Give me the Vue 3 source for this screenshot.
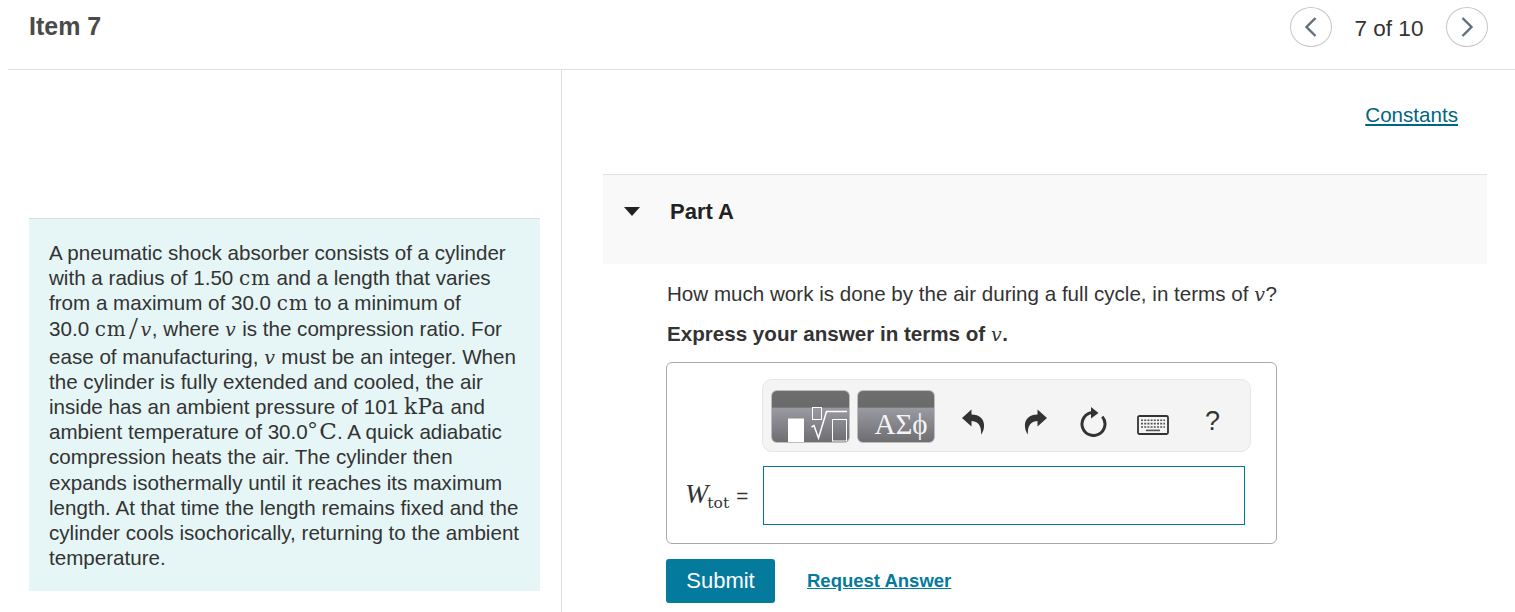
<template>
  <div class="page">
    <header class="top">
      <h1>Item 7</h1>
      <nav class="pager">
        <button class="round" aria-label="Previous">
          <svg width="14" height="22" viewBox="0 0 14 22"><path d="M11.5 2 L2.5 11 L11.5 20" fill="none" stroke="#5f6f7c" stroke-width="2.4"/></svg>
        </button>
        <span class="count">7 of 10</span>
        <button class="round" aria-label="Next">
          <svg width="14" height="22" viewBox="0 0 14 22"><path d="M2.5 2 L11.5 11 L2.5 20" fill="none" stroke="#5f6f7c" stroke-width="2.4"/></svg>
        </button>
      </nav>
    </header>

    <div class="columns">
      <section class="left">
        <div class="intro">
          <p>
            <span v-for="(line, i) in introLines" :key="i" class="line" :class="{ tall: line.tall }">
              <template v-for="(part, j) in line.parts" :key="j">
                <span v-if="part.m" :class="part.m">{{ part.t }}</span>
                <template v-else>{{ part.t }}</template>
              </template>
            </span>
          </p>
        </div>
      </section>

      <section class="right">
        <div class="links"><a href="#" class="constants">Constants</a></div>

        <div class="part-head">
          <span class="caret"></span>
          <h2>Part A</h2>
        </div>

        <div class="part-body">
          <p class="question">How much work is done by the air during a full cycle, in terms of <i class="mv">v</i>?</p>
          <p class="express">Express your answer in terms of <i class="mv">v</i>.</p>

          <div class="answer">
            <div class="toolbar">
              <div class="tool-btn wide">
                <svg width="77" height="35" viewBox="0 0 77 35">
                  <rect x="16" y="11.5" width="16" height="23.5" fill="#fff"/>
                  <rect x="40.5" y="0.5" width="9" height="12" fill="none" stroke="#fff" stroke-width="1"/>
                  <path d="M39.5 20 L42 18.5 L46.5 31 L54.5 4.5 H75" fill="none" stroke="#fff" stroke-width="1.5"/>
                  <rect x="60.5" y="12.5" width="14" height="21.5" fill="none" stroke="#fff" stroke-width="1"/>
                </svg>
              </div>
              <div class="tool-btn greek"><span>ΑΣϕ</span></div>

              <div class="tool-icons">
                <svg width="24" height="26" viewBox="0 0 24 26"><path d="M1 9 L10.5 .5 V5.5 C18 5.5 24 10 23 18 C22.8 21 21.5 23.5 20 25.5 C20.5 20 19.5 12.5 10.5 12 V17.5 Z" fill="#333"/></svg>
                <svg width="24" height="26" viewBox="0 0 24 26"><path d="M23 9 L13.5 .5 V5.5 C6 5.5 0 10 1 18 C1.2 21 2.5 23.5 4 25.5 C3.5 20 4.5 12.5 13.5 12 V17.5 Z" fill="#333"/></svg>
                <svg width="28" height="30" viewBox="0 0 28 30"><path d="M12 5.6 A11.5 11.5 0 1 0 22.3 9.6" fill="none" stroke="#333" stroke-width="3"/><path d="M11 0 L18.5 6 L11 11.5 Z" fill="#333"/></svg>
                <svg class="kbd" width="32" height="20" viewBox="0 0 32 20">
                  <rect x="1" y="1" width="30" height="18" rx="1.5" fill="#f4f4f4" stroke="#333" stroke-width="1.8"/>
                  <path d="M4 5.2 H28" stroke="#555" stroke-width="1.6" stroke-dasharray="2 1.2"/>
                  <path d="M4 8.6 H28" stroke="#555" stroke-width="1.6" stroke-dasharray="2 1.2"/>
                  <path d="M4 12 H28" stroke="#555" stroke-width="1.6" stroke-dasharray="2 1.2"/>
                  <path d="M9 15.4 H23" stroke="#555" stroke-width="1.6"/>
                </svg>
                <span class="help">?</span>
              </div>
            </div>

            <div class="entry">
              <label class="entry-label"><i class="w">W</i><sub>tot</sub><span class="eq">=</span></label>
              <div class="entry-box"></div>
            </div>
          </div>

          <div class="actions">
            <button class="submit">Submit</button>
            <a href="#" class="request">Request Answer</a>
          </div>
        </div>
      </section>
    </div>
  </div>
</template>

<script setup>
const t = (s) => ({ t: s })
const cm = (s) => ({ t: s, m: 'mr' })
const v = { t: 'v', m: 'mv' }

const introLines = [
  { parts: [t('A pneumatic shock absorber consists of a cylinder')] },
  { parts: [t('with a radius of 1.50 '), cm('cm'), t(' and a length that varies')] },
  { parts: [t('from a maximum of 30.0 '), cm('cm'), t(' to a minimum of')] },
  { tall: true, parts: [t('30.0 '), cm('cm'), { t: '/', m: 'slash' }, v, t(', where '), v, t(' is the compression ratio. For')] },
  { parts: [t('ease of manufacturing, '), v, t(' must be an integer. When')] },
  { parts: [t('the cylinder is fully extended and cooled, the air')] },
  { parts: [t('inside has an ambient pressure of 101 '), { t: 'kPa', m: 'mk' }, t(' and')] },
  { parts: [t('ambient temperature of 30.0'), { t: '°', m: 'deg' }, { t: 'C', m: 'bigc' }, t('. A quick adiabatic')] },
  { parts: [t('compression heats the air. The cylinder then')] },
  { parts: [t('expands isothermally until it reaches its maximum')] },
  { parts: [t('length. At that time the length remains fixed and the')] },
  { parts: [t('cylinder cools isochorically, returning to the ambient')] },
  { parts: [t('temperature.')] }
]
</script>

<style>
html, body { margin: 0; background: #fff; overflow: hidden; }
</style>

<style scoped>
.page {
  width: 1515px;
  height: 612px;
  overflow: hidden;
  font-family: "Liberation Sans", Arial, sans-serif;
  font-size: 20.6px;
  color: #333;
}
.top {
  height: 69px;
  margin-left: 8px;
  border-bottom: 1px solid #e0e0e0;
  display: flex;
  justify-content: space-between;
  align-items: flex-start;
}
h1 {
  margin: 12px 0 0 21px;
  font-size: 25px;
  line-height: 28px;
  font-weight: 700;
  color: #4a4a4a;
}
.pager {
  display: flex;
  align-items: center;
  margin: 7px 27px 0 0;
}
.round {
  width: 42px;
  height: 40px;
  border: 1px solid #c7c7c7;
  border-radius: 50%;
  background: #fff;
  padding: 0;
  display: flex;
  align-items: center;
  justify-content: center;
}
.count {
  width: 114px;
  text-align: center;
  font-size: 22.5px;
  margin-top: 4px;
}
.columns {
  display: flex;
  margin-left: 8px;
  height: 542px;
}
.left {
  width: 554px;
  flex: none;
  border-right: 1px solid #dedede;
  padding: 148px 0 0 21px;
  box-sizing: border-box;
}
.intro {
  width: 511px;
  height: 373px;
  box-sizing: border-box;
  background: #e6f6f6;
  border-top: 1px solid #dcdcdc;
  padding: 21px 20px 0;
}
.intro p { margin: 0; }
.line {
  display: block;
  height: 25.2px;
  line-height: 25.2px;
  white-space: nowrap;
}
.line.tall { height: 28px; }
.mr, .mv, .mk {
  font-family: "DejaVu Serif", "Liberation Serif", serif;
  font-size: 19px;
  line-height: 0;
}
.mr { font-size: 20px; letter-spacing: 0.8px; }
.mk { font-size: 21.5px; letter-spacing: 0.5px; }
.mv { font-style: italic; letter-spacing: 0.6px; }
.w, .slash {
  font-family: "Liberation Serif", "DejaVu Serif", serif;
}
.slash { font-size: 32px; line-height: 20px; vertical-align: -3px; margin: 0 2.5px; }
.deg { font-size: 24px; vertical-align: 1px; line-height: 10px; }
.bigc {
  font-family: "DejaVu Serif", "Liberation Serif", serif;
  font-size: 23px;
  line-height: 0;
  margin-left: 2px;
}
.right {
  flex: 1;
  padding-left: 41px;
  padding-right: 28px;
  box-sizing: border-box;
}
.links {
  display: flex;
  justify-content: flex-end;
  padding: 33px 29px 0 0;
  height: 72px;
  box-sizing: border-box;
  margin-bottom: 32px;
}
.constants {
  color: #00667f;
  text-decoration: underline;
  line-height: 24px;
}
.part-head {
  height: 90px;
  box-sizing: border-box;
  background: #f9f9f9;
  border-top: 1px solid #e0e0e0;
  display: flex;
  align-items: flex-start;
  padding: 23px 0 0 21px;
}
.caret {
  width: 0;
  height: 0;
  margin-top: 9px;
  border-left: 8px solid transparent;
  border-right: 8px solid transparent;
  border-top: 9px solid #222;
}
h2 {
  margin: 1px 0 0 30px;
  font-size: 22px;
  line-height: 26px;
  font-weight: 700;
  color: #222;
}
.part-body { padding: 18px 0 0 63px; }
.question, .express {
  margin: 0;
  height: 24px;
  line-height: 24px;
  white-space: nowrap;
  text-indent: 1px;
}
.express {
  margin-top: 16px;
  font-weight: 700;
}
.express .mv { font-weight: 400; }
.answer {
  width: 611px;
  height: 182px;
  box-sizing: border-box;
  margin-top: 16px;
  border: 1px solid #aaa;
  border-radius: 6px;
  padding: 16px 0 0 95px;
}
.toolbar {
  width: 489px;
  height: 73px;
  box-sizing: border-box;
  background: #f4f4f4;
  border: 1px solid #e6e6e6;
  border-radius: 10px;
  display: flex;
  align-items: flex-start;
  padding: 10px 0 0 8px;
  gap: 7px;
}
.tool-btn {
  width: 78px;
  height: 53px;
  box-sizing: border-box;
  border-radius: 6px;
  border: 1px solid #bdbdbd;
  background: linear-gradient(#6e6e6e 0, #6a6a6a 32%, #9a9aa2 33%, #6d6d72 100%);
  display: flex;
  align-items: flex-end;
  justify-content: center;
  overflow: hidden;
}
.tool-btn.wide { width: 79px; }
.tool-btn svg { display: block; }
.greek span {
  font-family: "Liberation Serif", "DejaVu Serif", serif;
  font-size: 29px;
  line-height: 34px;
  color: #f4f4f4;
  padding: 0 0 1px 10px;
  white-space: nowrap;
}
.tool-icons {
  display: flex;
  align-items: center;
  height: 53px;
  margin-top: 5px;
}
.tool-icons svg { flex: none; }
.tool-icons svg:nth-child(1) { margin-left: 19px; }
.tool-icons svg:nth-child(2) { margin-left: 39px; }
.tool-icons svg:nth-child(3) { margin-left: 32px; }
.tool-icons .kbd { margin: 6px 0 0 29px; }
.help {
  margin-left: 36px;
  font-size: 27px;
  color: #333;
}
.entry {
  display: flex;
  align-items: flex-start;
  margin: 14px 0 0 -95px;
}
.entry-label {
  width: 96px;
  height: 59px;
  box-sizing: border-box;
  padding: 12px 0 0 18px;
  white-space: nowrap;
  line-height: 32px;
}
.w { font-size: 28px; font-style: italic; }
sub {
  font-family: "DejaVu Serif", "Liberation Serif", serif;
  font-size: 15.5px;
  line-height: 0;
  vertical-align: -5px;
  margin-left: -1px;
}
.eq { margin-left: 7px; }
.entry-box {
  width: 482px;
  height: 59px;
  box-sizing: border-box;
  border: 1px solid #04789c;
  background: #fff;
}
.actions {
  display: flex;
  align-items: center;
  margin-top: 15px;
}
.submit {
  width: 109px;
  height: 44px;
  border: 0;
  border-radius: 3px;
  background: #047a9c;
  color: #fff;
  font-family: inherit;
  font-size: 22px;
  padding: 0;
}
.request {
  margin-left: 32px;
  font-size: 18.5px;
  font-weight: 700;
  color: #047a9c;
  text-decoration: underline;
}
</style>
